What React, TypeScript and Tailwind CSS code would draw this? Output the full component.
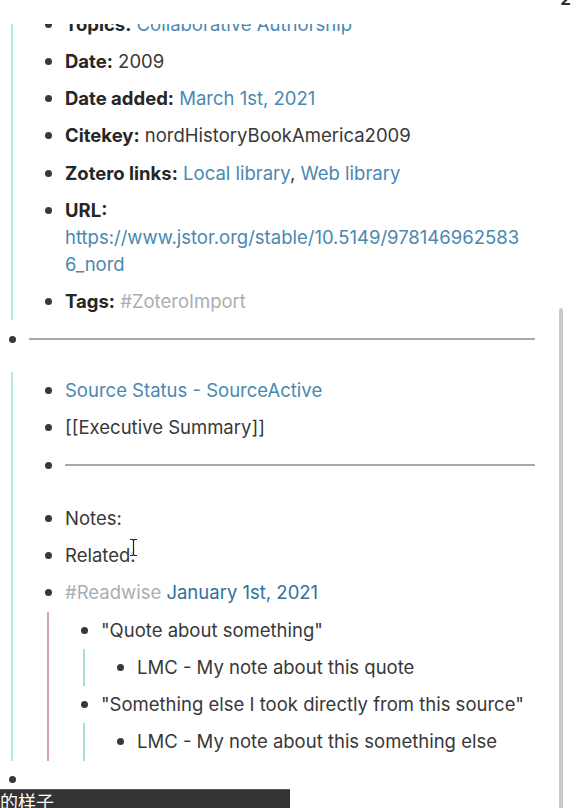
import React from "react";

type Props = { children?: React.ReactNode; className?: string };

const Bullet = () => (
  <div className="flex h-[27px] w-[34px] shrink-0 items-center justify-center">
    <span className="h-[7px] w-[7px] rounded-full bg-[#383838]" />
  </div>
);

const Row = ({ children, className = "" }: Props) => (
  <div className={`flex py-[5.125px] ${className}`}>
    <Bullet />
    <div className="min-w-0 flex-1">{children}</div>
  </div>
);

// children block with the coloured guide line under the parent bullet
const Kids = ({ children, className = "" }: Props) => (
  <div className={`ml-[16px] border-l-2 pl-[18px] ${className}`}>{children}</div>
);

const Rule = () => (
  <div className="flex h-[27px] items-center">
    <div className="h-[2px] w-full bg-[#a8a8a8]" />
  </div>
);

const B = ({ children }: Props) => <span className="font-bold text-[#262626]">{children}</span>;
const A = ({ children }: Props) => <span className="text-[#4a88b0]">{children}</span>;
const Tag = ({ children }: Props) => <span className="text-[#a9aeb2]">{children}</span>;

const App = () => {
  return (
    <div className="relative h-[808px] w-[577px] overflow-hidden bg-white font-['Inter','Noto_Sans',sans-serif] text-[18.5px] leading-[27px] text-[#383838]">
      {/* header strip that hides the scrolled content */}
      <div className="absolute inset-x-0 top-0 z-10 h-[24px] bg-white">
        <span className="absolute right-[6px] top-[-14px] text-[17px] font-bold text-[#333]">2</span>
      </div>

      <div className="-ml-[5px] w-[540px] pt-[5.5px]">
        <Kids className="border-[#b0efd2]">
          <Row>
            <B>Topics:</B> <A>Collaborative Authorship</A>
          </Row>
          <Row>
            <B>Date:</B> 2009
          </Row>
          <Row>
            <B>Date added:</B> <A>March 1st, 2021</A>
          </Row>
          <Row>
            <B>Citekey:</B> nordHistoryBookAmerica2009
          </Row>
          <Row>
            <B>Zotero links:</B> <A>Local library</A>, <A>Web library</A>
          </Row>
          <Row>
            <B>URL:</B>
            <span className="block text-[#4a88b0]">
              https://www.jstor.org/stable/10.5149/978146962583
              <br />
              6_nord
            </span>
          </Row>
          <Row>
            <B>Tags:</B> <Tag>#ZoteroImport</Tag>
          </Row>
        </Kids>

        <Row className="mt-[0.5px]">
          <Rule />
        </Row>

        <Kids className="mt-[14px] border-[#b0efd2]">
          <Row>
            <A>Source Status - SourceActive</A>
          </Row>
          <Row>[[Executive Summary]]</Row>
          <Row className="mb-[16px]">
            <Rule />
          </Row>
          <Row>Notes:</Row>
          <Row>Related:</Row>
          <Row>
            <Tag>#Readwise</Tag> <span className="text-[#33709a]">January 1st, 2021</span>
          </Row>
          <Kids className="border-[#d6a4ab]">
            <Row>"Quote about something"</Row>
            <Kids className="border-[#acdcd6]">
              <Row>LMC - My note about this quote</Row>
            </Kids>
            <Row>"Something else I took directly from this source"</Row>
            <Kids className="border-[#acdcd6]">
              <Row>LMC - My note about this something else</Row>
            </Kids>
          </Kids>
        </Kids>

        <Row>&nbsp;</Row>
      </div>

      {/* text cursor over "Related:" */}
      <svg className="absolute left-[129px] top-[538px]" width="9" height="19" viewBox="0 0 9 19">
        <path d="M1 1.5h2.5L4.5 2.5 5.5 1.5H8M4.5 2.5v14M1 17.5h2.5l1-1 1 1H8" fill="none" stroke="#fff" strokeWidth="2.6" />
        <path d="M1 1.5h2.5L4.5 2.5 5.5 1.5H8M4.5 2.5v14M1 17.5h2.5l1-1 1 1H8" fill="none" stroke="#222" strokeWidth="1.2" />
      </svg>

      {/* scrollbar */}
      <div className="absolute left-[559px] top-[308px] h-[520px] w-[4px] rounded-full bg-[#c9c9c9]" />

      {/* caption strip */}
      <div className="absolute left-0 top-[789px] h-[30px] w-[290px] border-t border-[#5a5a5a] bg-[#333333]">
        <span className="block pt-[2px] font-['Noto_Sans_CJK_SC',sans-serif] text-[18px] leading-[18px] text-white">的样子</span>
      </div>
    </div>
  );
};

export default App;
